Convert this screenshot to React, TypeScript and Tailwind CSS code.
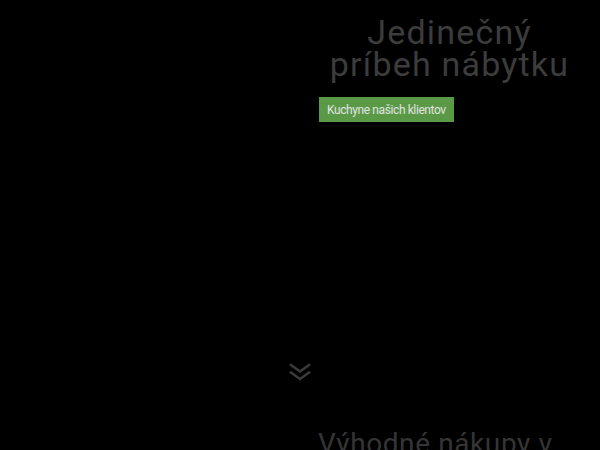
export default function App() {
    return (
        <div className="w-full h-[450px] bg-black overflow-hidden flex flex-col" style={{ fontFamily: 'Roboto, "Noto Sans", sans-serif' }}>
            {/* Hero */}
            <section className="h-[363px] flex shrink-0">
                <div className="w-1/2" />
                <div className="w-1/2 pl-[19px] pr-[20px] pt-[16px]">
                    <h1 className="text-center text-[34px] leading-[32px] text-[#3c3c3c] font-normal tracking-[1.2px]">
                        Jedinečný
                        <br />
                        príbeh nábytku
                    </h1>
                    <button className="mt-[17px] h-[25px] px-[8px] bg-[#5a9a47] text-[#e2e2e2] text-[12px] tracking-[-0.4px]">
                        Kuchyne našich klientov
                    </button>
                </div>
            </section>

            {/* Scroll hint */}
            <div className="flex justify-center shrink-0">
                <svg width="22" height="18" viewBox="0 0 22 18" fill="none" stroke="#3a3a3a" strokeWidth="2.6" strokeLinecap="square">
                    <polyline points="2,2 11,8.5 20,2" />
                    <polyline points="2,9.5 11,16 20,9.5" />
                </svg>
            </div>

            {/* Next section */}
            <section className="flex mt-[47px] shrink-0">
                <div className="w-1/2" />
                <h2 className="w-1/2 pl-[18px] whitespace-nowrap text-[28px] leading-[32px] text-[#353535] tracking-[0.6px]">Výhodné nákupy v</h2>
            </section>
        </div>
    );
}
